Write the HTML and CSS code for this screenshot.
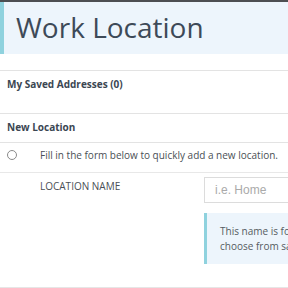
FILE: index.html
```html
<!DOCTYPE html>
<html lang="en">

<head>
    <meta charset="utf-8">
    <title>Work Location</title>
    <link rel="stylesheet" href="styles.css">
</head>

<body>
    <div class="topbar"></div>
    <div class="page-header">
        <h1>Work Location</h1>
    </div>

    <div class="section">
        <div class="section-title">My Saved Addresses (0)</div>
        <div class="saved-list"></div>
    </div>

    <div class="section">
        <div class="section-title">New Location</div>
        <div class="option-row">
            <div class="radio-col"><span class="radio"></span></div>
            <div class="option-text">Fill in the form below to quickly add a new location.</div>
        </div>
        <div class="field-row">
            <div class="field-label">LOCATION NAME</div>
            <div class="field-body">
                <input type="text" class="text-input" placeholder="i.e. Home" />
                <div class="info-box">This name is for your reference when you choose from saved locations later.</div>
            </div>
        </div>
    </div>
</body>

</html>
```

FILE: styles.css
```css
* {
    margin: 0px;
    padding: 0px;
    box-sizing: border-box;
}

html,
body {
    overflow: hidden;
}

body {
    font-family: "Open Sans", sans-serif;
    font-size: 10px;
    color: #4a4f55;
    background: #fff;
    width: 288px;
}

.topbar {
    height: 2px;
    background: #4d4f52;
}

.page-header {
    background: #edf5fc;
    border-left: 4px solid #8fd2de;
    padding: 6px 12px 8px;
    margin-bottom: 16px;
}

.page-header h1 {
    font-size: 28px;
    font-weight: 400;
    line-height: 38px;
    color: #3d4a58;
    white-space: nowrap;
}

.section {
    border-top: 1px solid #e3e3e3;
}

.section-title {
    font-weight: 700;
    line-height: 15px;
    padding: 6px 7px 7px;
    color: #3b4652;
}

.saved-list {
    height: 14px;
}

.option-row {
    display: flex;
    align-items: flex-start;
    height: 31px;
    padding-top: 5px;
    border-top: 1px solid #e3e3e3;
    border-bottom: 1px solid #e8e8e8;
}

.radio-col {
    width: 40px;
    flex-shrink: 0;
    padding: 2px 0 0 7px;
}

.radio {
    display: block;
    width: 10px;
    height: 10px;
    border: 1px solid #8a8a8a;
    border-radius: 50%;
}

.option-text {
    white-space: nowrap;
    line-height: 15px;
}

.field-row {
    display: flex;
    padding: 4px 0 23px;
    border-bottom: 1px solid #e6e6e6;
}

.field-label {
    width: 204px;
    flex-shrink: 0;
    padding: 2px 0 0 40px;
    line-height: 15px;
    white-space: nowrap;
}

.field-body {
    width: 240px;
    flex-shrink: 0;
}

.text-input {
    display: block;
    width: 100%;
    height: 26px;
    border: 1px solid #dcdcdc;
    padding: 0 10px;
    font-family: "Liberation Sans", sans-serif;
    font-size: 12px;
    outline: none;
}

.text-input::placeholder {
    color: #aaa;
}

.info-box {
    margin-top: 10px;
    background: #edf5fc;
    border-left: 3px solid #8fd2de;
    padding: 11px 16px 10px 13px;
    line-height: 15px;
    color: #555b61;
}
```
